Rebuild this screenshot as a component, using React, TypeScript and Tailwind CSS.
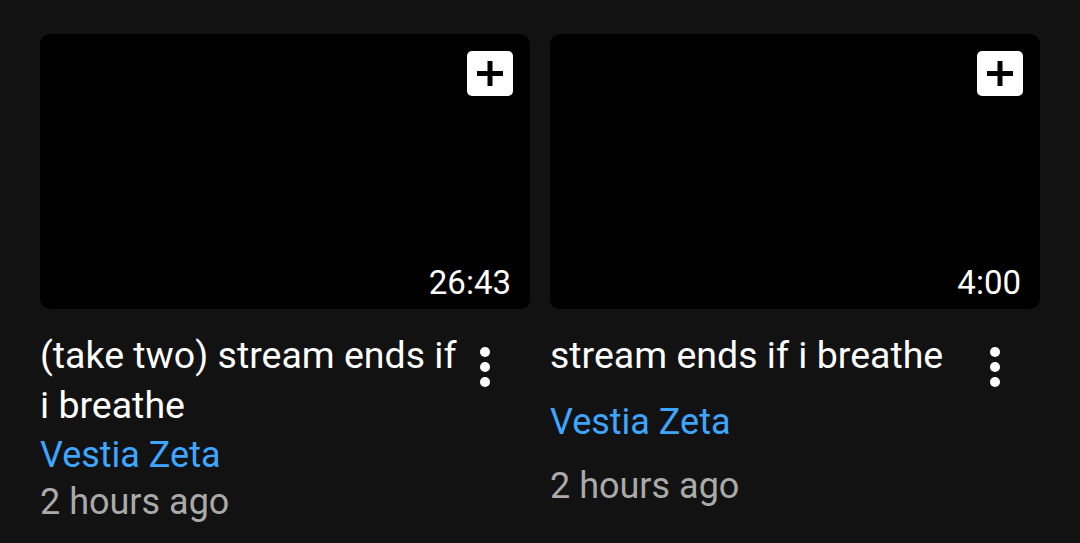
import React from "react";

type Video = {
  title: string;
  channel: string;
  age: string;
  duration: string;
  gap: string;
};

const videos: Video[] = [
  { title: "(take two) stream ends if i breathe", channel: "Vestia Zeta", age: "2 hours ago", duration: "26:43", gap: "mt-0" },
  { title: "stream ends if i breathe", channel: "Vestia Zeta", age: "2 hours ago", duration: "4:00", gap: "mt-[17px]" },
];

function PlusButton() {
  return (
    <div className="absolute top-[17px] right-[17px] w-[46px] h-[45px] rounded-[5px] bg-white flex items-center justify-center">
      <svg width="26" height="25" viewBox="0 0 26 25">
        <rect x="0" y="10" width="26" height="5" fill="#000" />
        <rect x="10.5" y="0" width="5" height="25" fill="#000" />
      </svg>
    </div>
  );
}

function MoreDots() {
  return (
    <div className="w-[60px] shrink-0 flex flex-col items-start pl-[10px] gap-[5px] pt-[17px]">
      <span className="w-[10px] h-[10px] rounded-full bg-white" />
      <span className="w-[10px] h-[10px] rounded-full bg-white" />
      <span className="w-[10px] h-[10px] rounded-full bg-white" />
    </div>
  );
}

function VideoCard({ v }: { v: Video }) {
  return (
    <div className="w-[490px] flex flex-col">
      {/* thumbnail */}
      <div className="relative h-[275px] rounded-[10px] bg-black">
        <PlusButton />
        <span className="absolute right-[19px] bottom-[7px] text-[33px] leading-[38px] text-white">
          {v.duration}
        </span>
      </div>

      <div className="flex mt-[21px]">
        <div className="flex-1 flex flex-col">
          <div className="text-[37.5px] leading-[50px] text-white">{v.title}</div>
          <div className={`text-[36px] leading-[50px] text-[#3ea6ff] ${v.gap}`}>{v.channel}</div>
          <div className={`text-[36px] leading-[45px] text-[#aaaaaa] ${v.gap}`}>{v.age}</div>
        </div>
        <MoreDots />
      </div>
    </div>
  );
}

export default function App() {
  return (
    <div
      className="w-[1080px] h-[543px] bg-[#121212] overflow-hidden"
      style={{ fontFamily: "Roboto, 'Liberation Sans', sans-serif" }}
    >
      <div className="flex gap-[20px] px-[40px] pt-[34px]">
        {videos.map((v) => (
          <VideoCard key={v.duration} v={v} />
        ))}
      </div>
    </div>
  );
}
